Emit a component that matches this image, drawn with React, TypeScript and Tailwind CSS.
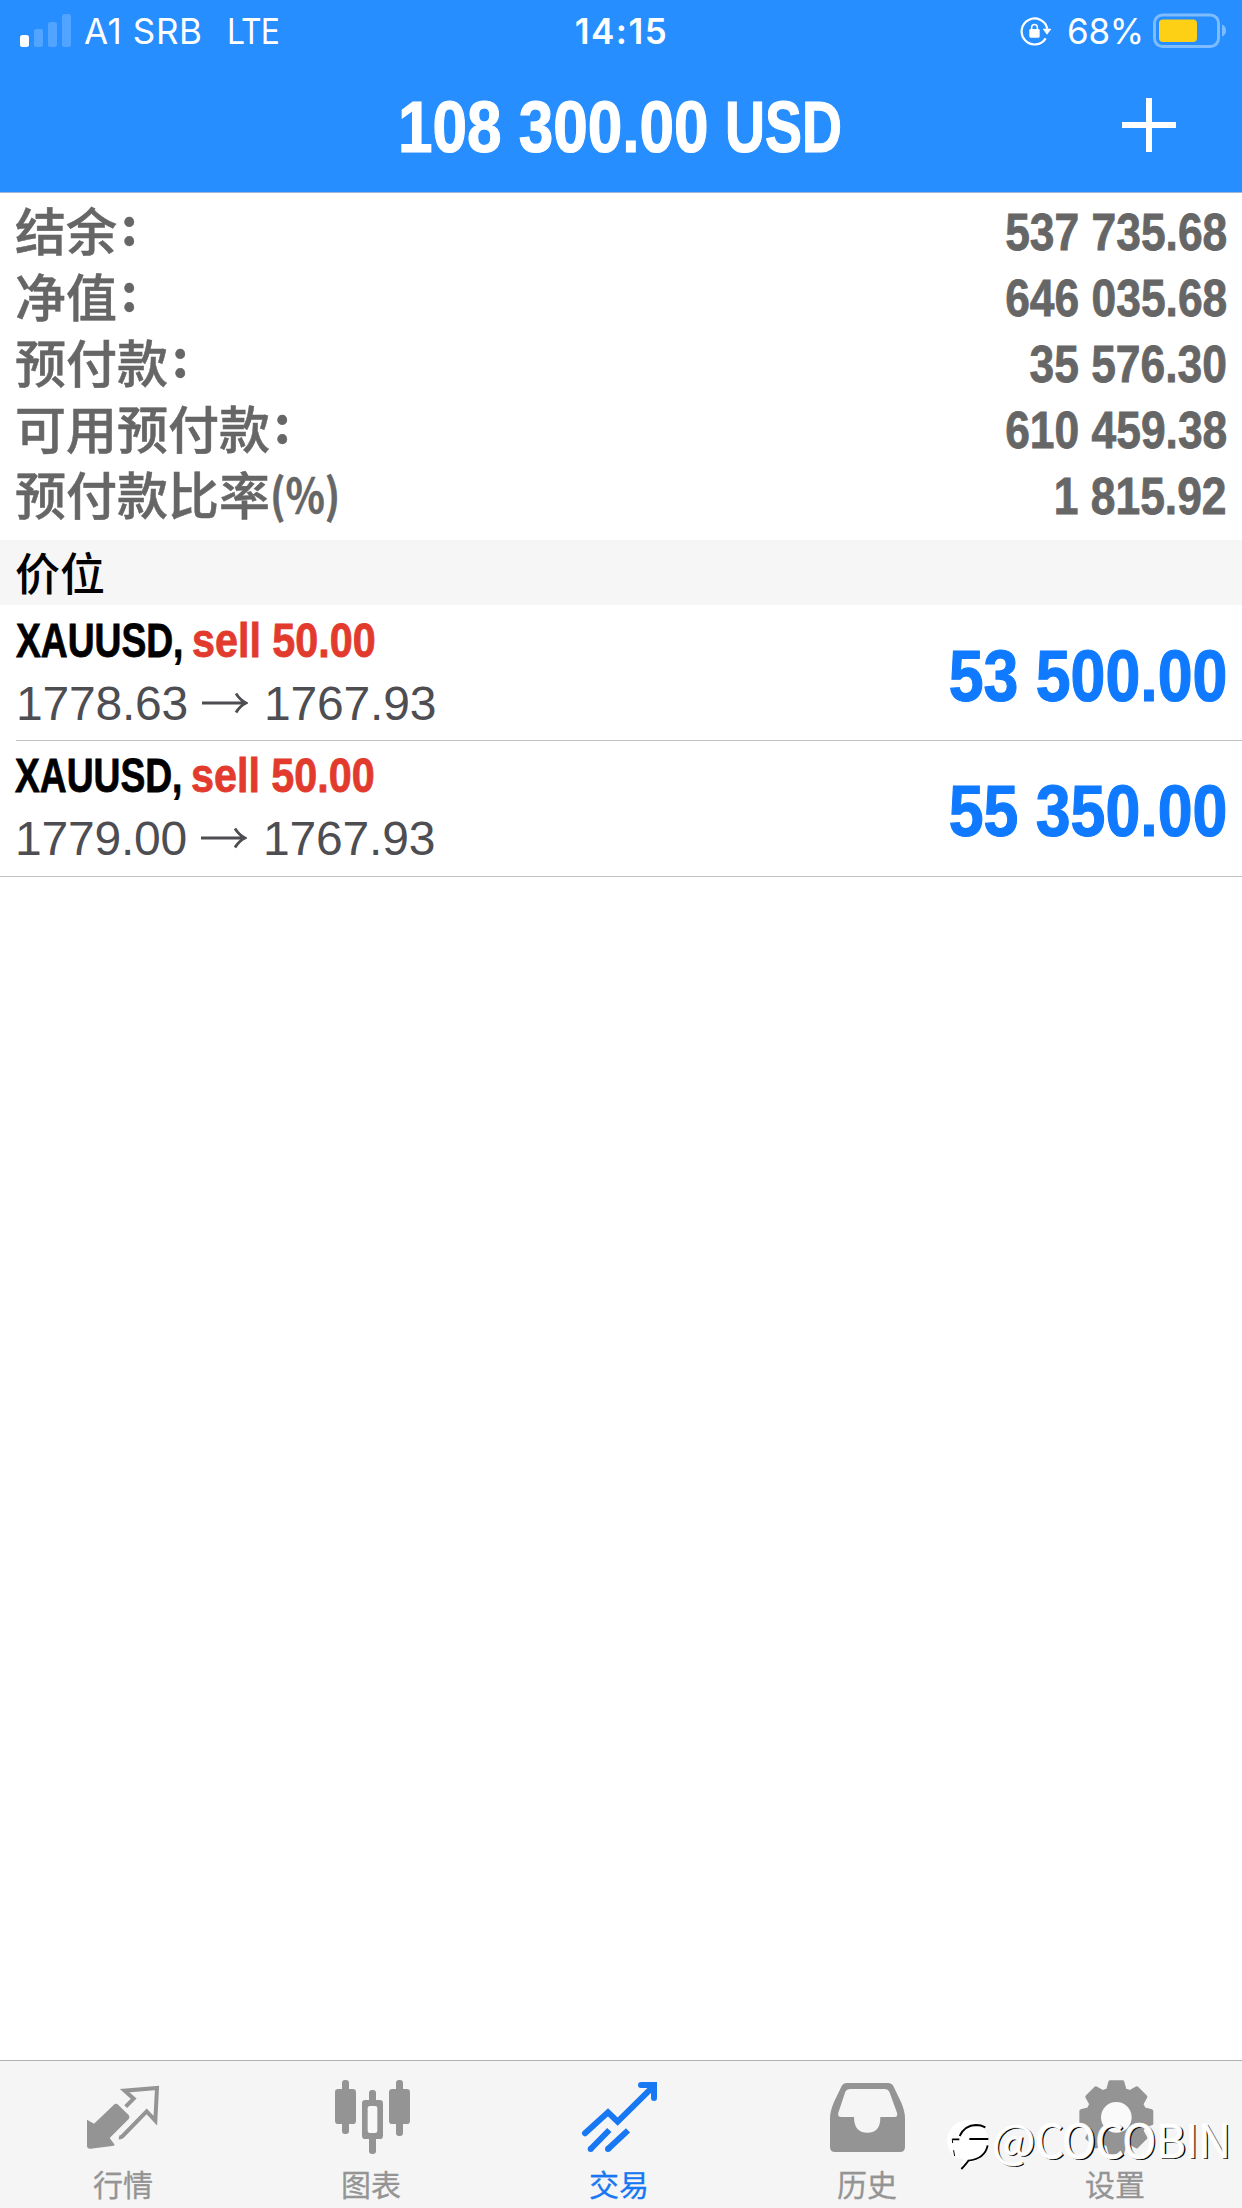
import type { ReactNode } from "react";

interface SummaryRow {
  label: string;
  value: string;
}

interface Position {
  symbol: string;
  side: string;
  open: string;
  current: string;
  profit: string;
}

const summary: SummaryRow[] = [
  { label: "结余:", value: "537 735.68" },
  { label: "净值:", value: "646 035.68" },
  { label: "预付款:", value: "35 576.30" },
  { label: "可用预付款:", value: "610 459.38" },
  { label: "预付款比率(%)", value: "1 815.92" },
];

const positions: Position[] = [
  {
    symbol: "XAUUSD,",
    side: "sell 50.00",
    open: "1778.63",
    current: "1767.93",
    profit: "53 500.00",
  },
  {
    symbol: "XAUUSD,",
    side: "sell 50.00",
    open: "1779.00",
    current: "1767.93",
    profit: "55 350.00",
  },
];

/* Eight-tooth gear outline around (589, 202) */
const gearPoints = Array.from({ length: 8 }, (_, i) => {
  const tooth = [
    [-17, 86],
    [-10, 107],
    [10, 107],
    [17, 86],
  ];
  return tooth
    .map(([offset, r]) => {
      const a = ((i * 45 + offset - 90) * Math.PI) / 180;
      return `${(589 + r * Math.cos(a)).toFixed(1)},${(202 + r * Math.sin(a)).toFixed(1)}`;
    })
    .join(" ");
}).join(" ");

function StatusBar() {
  return (
    <div className="grid h-[62px] grid-cols-3 font-['Inter',sans-serif] text-[35px] leading-[62px] text-white">
      <div className="flex items-center pl-5">
        <svg width="52" height="34" viewBox="0 0 52 34" fill="#fff" className="shrink-0">
          <rect x="0" y="21" width="9" height="12" rx="2.5" />
          <rect x="14" y="15" width="9" height="18" rx="2.5" opacity="0.2" />
          <rect x="28" y="8" width="9" height="25" rx="2.5" opacity="0.2" />
          <rect x="42" y="0" width="9" height="33" rx="2.5" opacity="0.2" />
        </svg>
        <span className="ml-3 w-[143px] whitespace-nowrap tracking-[0.6px]">A1 SRB</span>
        <span className="origin-left scale-x-[0.91] tracking-[-1px]">LTE</span>
      </div>
      <div className="pl-px text-center font-semibold tracking-[1.5px]">14:15</div>
      <div className="flex items-center justify-end pr-[22px]">
        <svg width="32" height="30" viewBox="236 50 96 90" className="mr-[16px]">
          <path
            d="M316 117A39 39 0 1 1 321 88"
            fill="none"
            stroke="#fff"
            strokeWidth="6.5"
          />
          <path d="M307 88h26l-13 18z" fill="#fff" />
          <rect x="267" y="89" width="31" height="26" rx="4" fill="#fff" />
          <path d="M274 92v-8a8.5 8.5 0 0 1 17 0v8" fill="none" stroke="#fff" strokeWidth="4.5" />
        </svg>
        <span className="mr-[9px] tracking-[-0.2px]">68%</span>
        <svg width="74" height="36" viewBox="0 0 74 36" className="-mr-[7px] shrink-0">
          <rect
            x="1.5"
            y="2"
            width="64"
            height="31.5"
            rx="8"
            fill="none"
            stroke="#7dbcff"
            strokeWidth="3"
          />
          <rect x="6" y="6.5" width="38" height="22.5" rx="4" fill="#fdd016" />
          <path d="M69 11.5q4 1.5 4 6t-4 6z" fill="#7dbcff" />
        </svg>
      </div>
    </div>
  );
}

function Header() {
  return (
    <header className="h-[193px] border-b border-[#9db8dc] bg-[#268eff]">
      <StatusBar />
      <div className="grid h-[130px] grid-cols-[1fr_446px_1fr] items-center">
        <div />
        <h1 className="flex font-['Liberation_Sans',sans-serif] text-[72px] leading-[128px] font-bold whitespace-nowrap text-white [-webkit-text-stroke:1.2px_currentColor]">
          <span className="w-[327px]">
            <span className="inline-block origin-left scale-x-[0.862]">108 300.00</span>
          </span>
          <span className="inline-block origin-left scale-x-[0.77]">USD</span>
        </h1>
        <svg
          width="54"
          height="54"
          viewBox="0 0 54 54"
          className="mr-[66px] mb-1 justify-self-end"
          stroke="#fff"
          strokeWidth="6"
        >
          <path d="M27 0v54M0 27h54" />
        </svg>
      </div>
    </header>
  );
}

function SummaryLabel({ text }: { text: string }) {
  if (text.endsWith(":")) {
    return (
      <span className="flex">
        {text.slice(0, -1)}
        <span className="mt-[-6px] ml-[4px] font-bold">:</span>
      </span>
    );
  }
  const [name, unit] = text.split("(");
  return (
    <span className="flex">
      {name}
      <span className="origin-left scale-x-[0.87] text-[47px] font-bold">({unit}</span>
    </span>
  );
}

function Summary() {
  return (
    <section className="h-[347px] pt-[5px] pr-[15px] pl-[15px] text-[51px] text-[#666]">
      {summary.map((row) => (
        <div key={row.label} className="flex h-[66px] items-center justify-between">
          <div className="mb-[5px] font-['Noto_Sans_CJK_SC',sans-serif] leading-[66px] font-medium whitespace-nowrap [-webkit-text-stroke:0.5px_currentColor]">
            <SummaryLabel text={row.label} />
          </div>
          <span className="mt-[3px] origin-right scale-x-[0.87] font-['Liberation_Sans',sans-serif] leading-[66px] font-bold [-webkit-text-stroke:0.8px_currentColor]">
            {row.value}
          </span>
        </div>
      ))}
    </section>
  );
}

function PositionRow({ position, last }: { position: Position; last: boolean }) {
  return (
    <li className={last ? "" : "pl-4"}>
      <div
        className={
          last
            ? "flex h-[136px] items-center justify-between border-b border-[#c2c2c5] pr-[15px] pb-[4px] pl-[15px]"
            : "flex h-[136px] items-center justify-between border-b border-[#c2c2c5] pr-[15px] pb-[2px]"
        }
      >
        <div className="font-['Liberation_Sans',sans-serif] text-[48px] leading-[63px] whitespace-nowrap">
          <div className="flex font-bold [-webkit-text-stroke:0.8px_currentColor]">
            <span className="w-[176px] text-black">
              <span className="inline-block origin-left scale-x-[0.775]">{position.symbol}</span>
            </span>
            <span className="inline-block origin-left scale-x-[0.86] text-[#e23b2e]">
              {position.side}
            </span>
          </div>
          <div className="flex items-center text-[#4d4d52]">
            <span className="tracking-[-0.2px]">{position.open}</span>
            <svg
              width="46"
              height="22"
              viewBox="0 0 46 22"
              fill="none"
              stroke="currentColor"
              strokeWidth="2.8"
              className="mr-[16px] ml-[14px]"
            >
              <path d="M0 11h44M34 1.5q4 6.5 10 9.5q-6 3-10 9.5" />
            </svg>
            <span className="tracking-[-0.2px]">{position.current}</span>
          </div>
        </div>
        <span className="mt-[8px] origin-right scale-x-[0.87] font-['Liberation_Sans',sans-serif] text-[72px] leading-[80px] font-bold text-[#0f7aff] [-webkit-text-stroke:1.2px_currentColor]">
          {position.profit}
        </span>
      </div>
    </li>
  );
}

interface TabProps {
  label: string;
  viewBox: string;
  active?: boolean;
  children: ReactNode;
}

function Tab({ label, viewBox, active, children }: TabProps) {
  return (
    <button
      className={
        active
          ? "flex flex-col items-center pt-[15px] text-[#1877f2]"
          : "flex flex-col items-center pt-[15px] text-[#949494]"
      }
    >
      <svg width="80" height="80" viewBox={viewBox} fill="currentColor">
        {children}
      </svg>
      <span className="mt-[6px] mr-[2px] font-['Noto_Sans_CJK_SC',sans-serif] text-[30px] leading-[42px] [-webkit-text-stroke:0.3px_currentColor]">
        {label}
      </span>
    </button>
  );
}

function TabBar() {
  return (
    <nav className="relative h-[148px] border-t border-[#b2b2b2] bg-[#f5f5f5]">
      <div className="grid w-[1240px] grid-cols-5">
        <Tab label="行情" viewBox="72 78 240 240">
          <path d="M81 209l21 12 59-56q7-7 14 0l31 30q5 6 0 12l-57 57 15 20q-2 4-8 4l-64 8q-11 1-11-9z" />
          <path
            d="M197 170l24-24-27-24 97-8-5 98-26-28-74 76q-4 3-9 2"
            fill="none"
            stroke="currentColor"
            strokeWidth="12"
          />
        </Tab>
        <Tab label="图表" viewBox="816 78 240 240">
          <rect x="846" y="90" width="21" height="162" rx="9" />
          <rect x="825" y="117" width="63" height="105" rx="10" />
          <rect x="927" y="120" width="21" height="192" rx="9" />
          <rect x="906" y="150" width="63" height="117" rx="10" />
          <rect x="923" y="168" width="29" height="81" rx="7" fill="#f8f8f8" />
          <rect x="1008" y="90" width="21" height="168" rx="9" />
          <rect x="987" y="117" width="63" height="105" rx="10" />
        </Tab>
        <Tab label="交易" viewBox="120 78 240 240" active>
          <g fill="none" stroke="currentColor" strokeWidth="18">
            <path d="M135 250l69-63 29 28 107-106" strokeLinecap="round" />
            <path d="M303 105h39v39" strokeLinecap="round" />
            <path d="M152 297l56-57M204 297l60-56" />
          </g>
          <circle cx="152" cy="297" r="9" />
          <circle cx="204" cy="297" r="9" />
        </Tab>
        <Tab label="历史" viewBox="864 78 240 240">
          <path
            fillRule="evenodd"
            d="M920 99h124q12 0 17 11l22 46q12 28 12 49v86q0 15-15 15H885q-15 0-15-15v-86q0-21 12-49l22-46q5-11 16-11zm9 18q-9 0-13 8l-21 63q-3 13 9 13h38q0 47 40 47t39-47h43q10 0 7-13l-23-63q-4-8-13-8z"
          />
        </Tab>
        <Tab label="设置" viewBox="468 78 240 240">
          <polygon
            points={gearPoints}
            stroke="currentColor"
            strokeWidth="11"
            strokeLinejoin="round"
          />
          <circle cx="589" cy="202" r="46" fill="#fafafa" />
        </Tab>
      </div>

      {/* Author mark laid over the last tab */}
      <div className="absolute top-[59px] left-[946px] flex items-start text-white">
        <svg width="44" height="50" viewBox="78 210 132 150">
          <path
            d="M142 211a61 61 0 0 1 62 61q2 44-38 58l-42 27 6-30-24-6a61 61 0 0 1 36-110z"
            fill="#fff"
          />
          <g fill="none" stroke="#000" strokeWidth="5.5">
            <path d="M119 258q15-32 49-33 15 0 28 7M98 268h20M148 267h57M203 286q-8 40-58 46-5 8-21 25" />
            <path d="M97 266q1 24 7 52" strokeWidth="3" strokeDasharray="14 22 20" />
          </g>
        </svg>
        <span className="mt-[-7px] ml-[2px] font-['Noto_Sans_CJK_SC',sans-serif] text-[46px] leading-[50px] font-normal tracking-[-0.8px] whitespace-nowrap [-webkit-text-stroke:0.6px_#fff] [text-shadow:1.6px_1.4px_0_#000]">
          @COCOBIN
        </span>
      </div>
    </nav>
  );
}

export default function App() {
  return (
    <div className="flex h-[2208px] w-[1242px] flex-col overflow-hidden bg-white">
      <Header />
      <Summary />
      <h2 className="h-[65px] bg-[#f6f6f6] pl-[15px] font-['Noto_Sans_CJK_SC',sans-serif] text-[45px] leading-[63px] font-medium text-black">
        价位
      </h2>
      <ul className="flex-1">
        {positions.map((position, index) => (
          <PositionRow
            key={position.open}
            position={position}
            last={index === positions.length - 1}
          />
        ))}
      </ul>
      <TabBar />
    </div>
  );
}
